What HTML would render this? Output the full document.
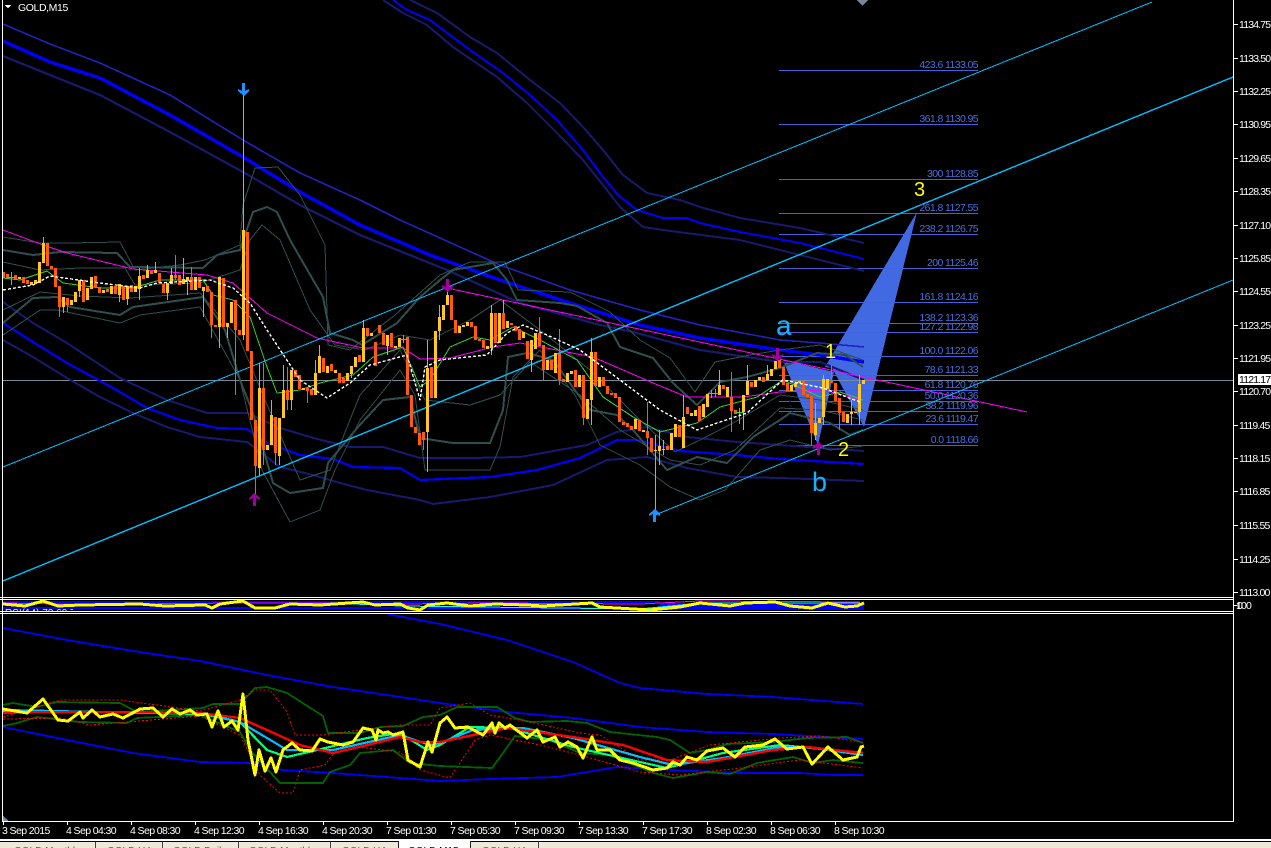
<!DOCTYPE html>
<html><head><meta charset="utf-8"><title>GOLD,M15</title>
<style>
html,body{margin:0;padding:0;background:#000;overflow:hidden}
svg{display:block;position:absolute;left:0;top:0}
text{font-family:"Liberation Sans",sans-serif}
.g{stroke:#2f4f4f;fill:none}
.p{fill:none;stroke-linejoin:round}
.ax text{fill:#fff;font-size:10.5px}
.px text{letter-spacing:-.85px}
.tm text{letter-spacing:-.6px}
.fib line{stroke:#3f62dd;stroke-width:1}
.fib text{fill:#4a6ee0;font-size:10.5px;text-anchor:end;letter-spacing:-.6px}
</style></head><body>
<svg width="1271" height="848" viewBox="0 0 1271 848" xmlns="http://www.w3.org/2000/svg">
<defs><clipPath id="c"><rect x="3" y="606" width="70" height="5"/></clipPath></defs>
<rect width="1271" height="848" fill="#000"/>
<g shape-rendering="crispEdges">
<!-- wave fill -->
<polygon points="783,360 818,445 834,372" fill="#4169e1"/>
<polygon points="825,367 917,212 864,427 832,368" fill="#4169e1"/>
<!-- fib -->
<g class="fib">
<line x1="779" x2="978" y1="70.5" y2="70.5"/><line x1="779" x2="978" y1="124.5" y2="124.5"/><line x1="779" x2="978" y1="179.5" y2="179.5"/><line x1="779" x2="978" y1="213.5" y2="213.5"/><line x1="779" x2="978" y1="234.5" y2="234.5"/><line x1="779" x2="978" y1="268.5" y2="268.5"/><line x1="779" x2="978" y1="302.5" y2="302.5"/><line x1="779" x2="978" y1="323.5" y2="323.5"/><line x1="779" x2="978" y1="332.5" y2="332.5"/><line x1="779" x2="978" y1="356.5" y2="356.5"/><line x1="779" x2="978" y1="375.5" y2="375.5"/><line x1="779" x2="978" y1="390.5" y2="390.5"/><line x1="779" x2="978" y1="401.5" y2="401.5"/><line x1="779" x2="978" y1="411.5" y2="411.5"/><line x1="779" x2="978" y1="424.5" y2="424.5"/><line x1="779" x2="978" y1="445.5" y2="445.5"/>
</g>
<!-- price line -->
<line x1="3" x2="1233" y1="380.5" y2="380.5" stroke="#778899"/>
<!-- blue envelopes, family 1 -->
<polyline class="p" stroke="#2222bb" stroke-width="1.6" points="3,24 50,44 100,63 170,95 243,140 300,173 360,200 400,220 500,265 570,290 640,310 700,325 780,340 820,343 864,347"/>
<polyline class="p" stroke="#0000ff" stroke-width="3.4" points="3,41 50,62 100,78 170,115 243,157 300,192 360,225 430,255 500,280 570,303 640,325 700,338 780,350 820,355 864,362"/>
<polyline class="p" stroke="#191970" stroke-width="2.2" points="3,56 50,75 100,95 170,132 243,172 300,205 360,235 447,270 520,303 600,325 633,332 700,350 780,362 820,362 864,380"/>
<!-- family 2 -->
<polyline class="p" stroke="#191970" stroke-width="2" points="410,0 437,13 470,37 497,53 530,80 560,103 583,127 603,150 623,175 647,193 680,200 700,207 740,218 800,228 864,243"/>
<polyline class="p" stroke="#0000ff" stroke-width="2" points="393,0 407,10 430,20 470,50 503,73 530,95 557,120 583,150 603,177 618,195 637,210 663,218 687,218 700,223 740,232 800,243 864,259"/>
<polyline class="p" stroke="#191970" stroke-width="2" points="383,0 403,13 427,25 453,47 497,77 527,103 557,133 583,160 603,185 620,207 643,227 663,230 740,240 800,255 864,271"/>
<!-- family 3 -->
<polyline class="p" stroke="#191970" stroke-width="2" points="3,302 33,323 67,343 120,378 167,400 207,413 247,413 280,428 317,439 350,447 383,447 420,458 470,458 520,457 587,445 617,432 647,427 687,437 737,442 780,445 864,451"/>
<polyline class="p" stroke="#0000ff" stroke-width="2.2" points="3,323 33,342 67,363 113,388 147,408 180,420 217,428 247,429 267,443 300,455 333,459 353,467 400,468 420,480 490,477 537,470 580,458 617,440 637,440 680,451 737,455 780,459 864,464"/>
<polyline class="p" stroke="#191970" stroke-width="2" points="3,340 33,357 67,378 100,397 133,413 167,427 200,437 247,442 280,467 313,475 340,483 367,490 420,500 433,504 490,497 553,485 607,460 647,457 687,468 737,477 780,478 864,481"/>
<!-- bollinger thick -->
<polyline class="g" stroke-width="2" points="3,250 33,255 60,252 117,253 130,267 203,268 217,255 240,250 245,235 253,212 267,207 277,212 290,240 323,297 330,333 353,340 362,345 397,323 420,297 440,280 453,270 493,263 507,280 517,300 560,303 577,306 607,323 620,347 653,358 673,383 697,405 720,382 747,377 780,368 817,353 845,355 863,367"/>
<polyline class="g" stroke-width="2" points="3,323 33,298 57,297 70,307 120,315 133,307 203,297 225,330 240,380 253,413 273,483 290,493 323,488 328,463 358,427 383,400 410,397 420,438 453,443 490,443 503,410 508,357 527,353 553,360 577,393 590,410 617,415 633,430 667,470 697,457 727,463 753,437 780,420 790,413 830,423 850,435 863,430"/>
<!-- bollinger thin -->
<polyline class="g" points="3,237 40,243 70,243 120,242 135,270 180,265 205,260 240,245 243,205 255,168 278,167 300,195 325,245 328,345 350,350 395,315 440,275 470,262 505,262 518,290 570,292 610,312 640,340 670,358 695,392 715,362 750,355 780,350 820,345 863,360"/>
<polyline class="g" points="3,335 40,310 57,310 120,323 140,315 200,307 240,380 262,470 290,522 320,510 335,470 360,420 400,370 415,395 425,470 490,470 500,447 513,377 540,350 575,395 600,445 640,465 670,487 700,500 725,490 760,450 790,440 830,450 863,446"/>
<polyline class="g" points="3,262 40,270 80,268 125,268 135,285 200,283 240,270 250,240 262,225 280,240 310,310 335,345 365,350 400,335 430,340 470,320 500,300 540,330 590,370 640,420 675,452 700,440 735,422 780,395 820,400 863,410"/>
<polyline class="g" points="3,310 40,292 80,296 130,298 200,293 240,340 265,400 300,480 330,470 360,395 400,350 425,400 470,405 500,395 530,362 580,395 620,430 670,460 700,465 735,450 780,408 820,410 863,420"/>
<!-- magenta -->
<polyline class="p" stroke="#ff00ff" points="3,230 43,245 67,253 133,269 207,275 233,283 267,313 317,338 363,348 403,348 420,359 450,358 493,347 520,343 593,357 653,383 687,397 743,397 780,392 823,390 863,400"/>
<line x1="447" y1="288" x2="1027" y2="412" stroke="#ff00ff"/>
<!-- green -->
<polyline class="p" stroke="#32cd32" points="3,278 20,280 47,271 63,283 100,288 133,288 160,280 203,280 213,295 233,300 250,317 267,367 277,393 300,390 320,383 353,375 373,357 403,347 420,387 430,380 450,347 473,337 490,340 513,327 540,340 577,360 603,397 633,417 660,432 697,423 720,407 757,397 783,380 820,397 840,392 863,400"/>
<!-- trend lines -->
<line x1="3" y1="467" x2="1152" y2="2" stroke="#00bfff"/>
<line x1="3" y1="581" x2="1233" y2="77" stroke="#00bfff" stroke-width="1.4"/>
<line x1="655" y1="515" x2="1233" y2="280" stroke="#00bfff"/>
<!-- wicks -->
<path fill="none" stroke="#e8a428" d="M43.500 237V243M63.500 307V313M79.500 291V297M119.500 295V302M127.500 299V305M139.500 268V300M147.500 265V278M155.500 262V270M167.500 293V300M171.500 268V275M183.500 258V279M187.500 281V295M203.500 291V317M219.500 327V348M227.500 327V338M243.500 84V340M259.500 363V475M271.500 400V445M279.500 456V465M283.500 365V390M291.500 400V410M315.500 360V373M319.500 345V356M351.500 374V378M363.500 320V328M387.500 346V355M427.500 340V472M439.500 305V340M447.500 285V295M491.500 305V355M503.500 300V315M531.500 360V372M591.500 338V425M655.500 435V515M659.500 430V465M663.500 440V455M683.500 395V420M719.500 370V385M743.500 412V430M747.500 365V381M767.500 365V380M815.500 403V440M823.500 375V425M851.500 400V425M859.500 375V425"/>
<path fill="none" stroke="#f06018" d="M59.500 307V317M67.500 305V312M175.500 255V280M191.500 267V277M211.500 325V338M235.500 320V395M255.500 466V495M263.500 363V465M275.500 453V465M287.500 367V410M307.500 391V403M423.500 440V450M539.500 317V333M543.500 370V380M559.500 329V385M583.500 418V425M647.500 402V455M731.500 372V432M811.500 433V446M839.500 398V430M831.500 365V381"/>
<!-- gold bodies -->
<path fill="none" stroke="#ffc91f" stroke-width="3" d="M19.500 277V279M31.500 282V285M35.500 280V284M39.500 262V283M43.500 243V263M63.500 297V307M71.500 300V305M75.500 292V302M79.500 280V291M87.500 288V300M91.500 277V289M103.500 290V293M111.500 286V294M119.500 284V295M127.500 286V299M135.500 286V292M139.500 276V289M147.500 270V278M155.500 270V273M167.500 283V293M171.500 275V284M183.500 279V284M187.500 277V281M195.500 277V290M203.500 287V291M219.500 277V327M227.500 323V327M231.500 302V323M243.500 230V335M259.500 388V468M267.500 445V450M271.500 415V445M279.500 418V456M283.500 390V418M291.500 370V400M303.500 388V390M315.500 373V395M319.500 356V373M327.500 366V373M335.500 370V373M347.500 373V381M351.500 366V374M355.500 357V367M363.500 328V362M371.500 333V336M387.500 335V346M395.500 346V348M399.500 338V347M427.500 368V432M435.500 331V398M439.500 317V331M443.500 305V320M447.500 295V305M459.500 326V333M463.500 325V327M467.500 322V326M487.500 346V349M491.500 313V348M499.500 313V343M507.500 321V328M523.500 332V338M531.500 340V360M535.500 333V349M547.500 360V370M555.500 353V373M567.500 373V382M571.500 371V374M579.500 375V387M587.500 399V419M591.500 352V400M599.500 377V387M635.500 419V429M643.500 430V432M655.500 450V451M659.500 446V451M663.500 449V450M671.500 433V450M675.500 424V437M683.500 417V448M691.500 413V416M695.500 410V416M703.500 404V417M707.500 394V407M719.500 385V395M727.500 387V397M743.500 395V412M747.500 381V395M755.500 380V387M759.500 377V380M767.500 374V380M771.500 369V376M775.500 361V369M791.500 385V391M795.500 383V387M799.500 381V383M815.500 423V435M819.500 418V423M823.500 379V417M827.500 379V389M847.500 414V423M851.500 412V414M855.500 412V413M859.500 384V412M863.500 380V384"/>
<!-- orange bodies -->
<path fill="none" stroke="#ff5a14" stroke-width="3" d="M3.500 272V278M7.500 274V278M15.500 275V279M23.500 277V283M27.500 280V284M47.500 243V266M51.500 266V269M55.500 268V287M59.500 286V307M67.500 298V305M83.500 280V302M95.500 276V287M99.500 287V293M107.500 289V292M115.500 286V294M123.500 286V300M131.500 285V292M143.500 275V279M151.500 271V274M159.500 273V283M163.500 284V293M175.500 275V278M179.500 275V285M191.500 277V290M199.500 277V288M207.500 286V292M211.500 292V325M215.500 325V327M223.500 278V327M235.500 300V330M239.500 330V335M247.500 232V351M251.500 351V420M255.500 420V466M263.500 388V450M275.500 417V453M287.500 390V400M295.500 370V377M299.500 375V389M307.500 388V391M311.500 389V395M323.500 358V372M331.500 364V371M339.500 373V383M343.500 378V383M359.500 355V362M367.500 328V336M375.500 342V366M379.500 325V333M383.500 333V345M391.500 333V347M407.500 337V395M411.500 395V427M415.500 427V433M419.500 433V445M423.500 432V440M431.500 367V398M451.500 295V320M455.500 320V333M471.500 322V327M475.500 326V340M479.500 339V341M483.500 340V348M495.500 313V343M503.500 313V329M511.500 323V325M515.500 326V331M519.500 329V340M527.500 341V359M539.500 333V346M543.500 345V370M551.500 360V370M559.500 353V380M563.500 379V382M575.500 370V387M583.500 375V418M595.500 352V386M603.500 377V386M607.500 386V394M611.500 393V395M615.500 393V398M619.500 397V422M623.500 422V425M627.500 423V427M631.500 426V430M639.500 420V431M647.500 431V438M651.500 438V452M667.500 446V450M679.500 425V437M687.500 407V414M699.500 406V421M723.500 385V389M731.500 397V411M735.500 410V414M751.500 382V387M763.500 377V382M779.500 360V368M783.500 367V385M787.500 383V391M803.500 381V395M807.500 394V397M811.500 396V433M831.500 381V383M835.500 383V401M839.500 398V413M843.500 412V422"/>
<!-- green crosses -->
<path fill="none" stroke="#32e032" d="M11.500 272V285M8 277.500H15M403.500 335V343M400 339.500H407M711.500 390V398M708 393.500H715M715.500 389V397M712 393.500H719M739.500 408V424M736 412.500H743"/>
<!-- white dashed -->
<polyline class="p" stroke="#fff" stroke-width="1.4" stroke-dasharray="3 2" points="3,290 33,285 50,276 100,283 140,288 157,283 210,280 233,288 250,303 267,330 300,380 327,398 350,383 370,365 407,355 420,400 425,367 440,360 487,355 507,333 523,325 547,335 580,350 620,380 660,410 697,430 720,422 747,413 777,385 783,380 823,388 860,402"/>
<path d="M790 400L798 440" stroke="#0000d0" stroke-dasharray="2 3" fill="none"/>
<!-- arrows -->
<path fill="#1e90ff" d="M242 83H245V91L249 89V91L244 96L238 91V89L242 91Z"/>
<path fill="#1e90ff" d="M653 522H656V514L660 516V514L655 509L649 514V516L653 514Z"/>
<path fill="#a000a0" d="M253 506H256V498L260 500V498L254.500 493L249 498V500L253 498Z"/>
<path fill="#a000a0" d="M446 279H449V287L453 285V287L447.500 292L442 287V285L446 287Z"/>
<path fill="#a000a0" d="M776 348H779V356L783 354V356L777.500 361L772 356V354L776 356Z"/>
<path fill="#a000a0" d="M817 455H820V447L824 449V447L818.500 442L813 447V449L817 447Z"/>
<polygon points="857,0 868,0 862.500,6" fill="#778899"/>
<!-- small panel -->
<rect x="660" y="603" width="204" height="7" fill="#0000ff"/>
<rect x="3" y="601" width="657" height="2" fill="#0000ff"/>
<rect x="3" y="607" width="657" height="2" fill="#0000ff"/>
<polyline class="p" stroke="#ff00ff" points="3,603 60,604 130,604 240,603 320,603 400,604 490,603 640,604 700,601 860,602"/>
<polyline class="p" stroke="#00ffff" points="330,603 400,606 640,609 700,603 860,603"/>
<polyline class="p" stroke="#ffff00" stroke-width="3" points="3,604 25,606 43,601 58,606 80,605 140,604 165,606 205,605 212,608 220,604 243,601 255,608 275,608 290,604 320,605 363,602 375,605 400,604 408,608 420,610 428,605 447,603 470,606 495,604 527,605 543,606 592,603 600,607 650,610 680,607 700,603 730,606 745,603 775,602 790,606 812,608 828,603 845,607 857,606 864,603"/>
<!-- bottom panel -->
<polyline class="p" stroke="#0000ff" stroke-width="1.8" points="3,628 67,640 133,651 200,661 267,675 333,687 400,697 440,703 507,712 573,718 640,727 707,732 773,734 863,739"/>
<polyline class="p" stroke="#0000ff" stroke-width="1.8" points="387,614 440,624 507,640 573,662 620,683 640,688 707,694 773,697 863,704"/>
<polyline class="p" stroke="#0000ff" stroke-width="1.8" points="3,727 67,740 133,753 200,762 250,763 283,770 333,773 400,778 440,781 490,779 557,777 617,767 673,770 740,773 800,773 833,775 863,775"/>
<polyline class="p" stroke="#006400" stroke-width="1.8" points="3,705 13,703 37,707 57,702 120,703 137,712 203,708 213,704 240,704 255,688 267,687 287,693 323,716 328,733 360,733 380,727 403,726 423,717 440,715 457,707 497,707 515,718 530,722 567,721 587,723 610,732 657,737 670,740 690,753 707,750 727,744 773,742 807,738 847,737 863,743"/>
<polyline class="p" stroke="#006400" stroke-width="1.8" points="3,726 17,723 37,717 80,722 127,723 137,718 200,715 240,732 250,750 280,783 323,783 330,772 350,765 360,753 393,750 410,763 440,766 492,768 503,753 515,736 550,740 580,753 610,755 653,773 673,778 707,772 730,774 757,763 793,757 813,763 833,760 863,763"/>
<polyline class="p" stroke="#ff0000" stroke-dasharray="2 2" points="3,717 40,706 60,700 120,700 200,711 240,700 255,690 270,690 287,712 295,735 323,735 360,730 400,725 430,725 440,708 470,703 490,715 530,722 580,733 600,735 640,760 670,760 710,745 780,738 820,736 863,742"/>
<polyline class="p" stroke="#ff0000" stroke-dasharray="2 2" points="3,719 60,718 90,725 200,716 240,735 260,775 280,793 293,793 300,770 325,765 340,745 400,752 420,770 450,778 475,740 490,735 540,745 580,755 640,772 680,775 740,768 800,760 863,768"/>
<polyline class="p" stroke="#00ff7f" stroke-width="2.2" points="3,712 100,712 203,714 240,722 267,750 287,757 317,750 367,738 400,733 427,750 440,745 470,727 510,728 573,747 640,762 667,768 723,753 780,745 863,753"/>
<polyline class="p" stroke="#00bfff" stroke-width="2.2" points="3,710 100,712 203,713 240,722 267,738 287,750 333,750 400,735 430,745 440,743 473,730 523,728 573,738 640,757 673,765 723,758 780,747 807,747 863,755"/>
<polyline class="p" stroke="#ff0000" stroke-width="2.4" points="3,713 33,712 100,712 200,713 240,718 267,730 300,745 333,753 367,745 400,737 420,742 440,742 473,735 507,728 573,737 623,745 667,760 707,762 773,750 807,747 863,753"/>
<polyline class="p" stroke="#ffff00" stroke-width="3" points="3,709 27,713 43,699 58,720 68,721 80,712 83,718 92,710 100,717 113,714 123,718 140,709 153,708 163,717 172,709 180,714 190,710 197,715 207,714 212,727 218,711 224,727 232,721 238,730 243,694 248,740 255,775 259,750 265,771 271,758 276,772 283,750 292,743 300,750 312,751 320,739 328,742 343,745 353,742 363,728 372,730 376,740 378,730 383,733 388,732 393,735 403,732 408,760 420,767 428,742 432,752 440,723 447,717 455,728 468,727 483,735 492,723 495,733 499,723 505,728 510,725 527,738 537,730 543,742 555,737 560,747 568,742 577,747 583,758 592,737 597,750 610,750 620,760 633,763 653,770 667,768 673,762 680,765 687,757 697,760 707,751 723,748 735,757 745,747 763,745 775,739 787,749 803,747 812,764 828,747 843,760 857,757 861,747 864,746"/>
<!-- frames -->
<rect x="2" y="0" width="1" height="822" fill="#fff"/>
<rect x="1233" y="0" width="1" height="822" fill="#fff"/>
<rect x="0" y="597" width="1234" height="1" fill="#fff"/>
<rect x="0" y="599" width="1234" height="1" fill="#fff"/>
<rect x="0" y="611" width="1234" height="1" fill="#fff"/>
<rect x="0" y="613" width="1234" height="1" fill="#fff"/>
<rect x="2" y="821" width="1232" height="1" fill="#fff"/>
<polygon points="3,816 9,821 3,821" fill="#778899"/>
<!-- price ticks -->
<path stroke="#fff" d="M1234 24.500h4M1234 58.500h4M1234 91.500h4M1234 124.500h4M1234 158.500h4M1234 191.500h4M1234 225.500h4M1234 258.500h4M1234 291.500h4M1234 325.500h4M1234 358.500h4M1234 391.500h4M1234 425.500h4M1234 458.500h4M1234 491.500h4M1234 525.500h4M1234 559.500h4M1234 592.500h4M1234 605.500h3"/>
<!-- time ticks -->
<path stroke="#fff" d="M3.500 822v3M67.500 822v3M131.500 822v3M195.500 822v3M259.500 822v3M323.500 822v3M387.500 822v3M451.500 822v3M515.500 822v3M579.500 822v3M643.500 822v3M707.500 822v3M771.500 822v3M835.500 822v3"/>
<polygon points="5,5 11,5 8,8.500" fill="#fff"/>
<rect x="1238" y="374" width="33" height="11" fill="#fff"/>
<rect x="0" y="839" width="1271" height="2" fill="#fff"/>
<rect x="0" y="842" width="1271" height="6" fill="#ece9d8"/>
<rect x="399" y="841" width="71" height="7" fill="#fff"/>
<rect x="398" y="841" width="1" height="7" fill="#222"/>
<rect x="470" y="841" width="1" height="7" fill="#222"/>
<path stroke="#444" d="M95.500 842v6M162.500 842v6M238.500 842v6M330.500 842v6M538.500 842v6"/>
</g>
<text x="18" y="11" fill="#fff" style="font-size:10.5px;letter-spacing:-.4px">GOLD,M15</text>
<text x="5" y="616" fill="#fff" clip-path="url(#c)" style="font-size:10px">RSI(14) 72.69 72.69</text>
<!-- fib labels -->
<g class="fib">
<text x="978" y="68">423.6  1133.05</text>
<text x="978" y="122">361.8  1130.95</text>
<text x="978" y="177">300  1128.85</text>
<text x="978" y="211">261.8  1127.55</text>
<text x="978" y="232">238.2  1126.75</text>
<text x="978" y="266">200  1125.46</text>
<text x="978" y="300">161.8  1124.16</text>
<text x="978" y="321">138.2  1123.36</text>
<text x="978" y="330">127.2  1122.98</text>
<text x="978" y="354">100.0  1122.06</text>
<text x="978" y="373">78.6  1121.33</text>
<text x="978" y="388">61.8  1120.76</text>
<text x="978" y="399">50.0  1120.36</text>
<text x="978" y="409">38.2  1119.96</text>
<text x="978" y="422">23.6  1119.47</text>
<text x="978" y="443">0.0  1118.66</text>
</g>
<!-- wave labels -->
<text x="776" y="335" fill="#12b4ff" style="font-size:28px">a</text>
<text x="812" y="491" fill="#12b4ff" style="font-size:27px">b</text>
<text x="825" y="358" fill="#ffff00" style="font-size:20px">1</text>
<text x="838" y="456" fill="#ffff00" style="font-size:20px">2</text>
<text x="914" y="196" fill="#ffff00" style="font-size:20px">3</text>
<!-- axis -->
<g class="ax px">
<text x="1239" y="28">1134.75</text><text x="1239" y="62">1133.50</text><text x="1239" y="95">1132.25</text><text x="1239" y="128">1130.95</text><text x="1239" y="162">1129.65</text><text x="1239" y="195">1128.35</text><text x="1239" y="229">1127.10</text><text x="1239" y="262">1125.85</text><text x="1239" y="295">1124.55</text><text x="1239" y="329">1123.25</text><text x="1239" y="362">1121.95</text><text x="1239" y="395">1120.70</text><text x="1239" y="429">1119.45</text><text x="1239" y="462">1118.15</text><text x="1239" y="495">1116.85</text><text x="1239" y="529">1115.55</text><text x="1239" y="563">1114.25</text><text x="1239" y="596">1113.00</text>
<text x="1236" y="609">100</text><text x="1237" y="609">0</text>
</g>
<text x="1239" y="383" fill="#000" style="font-size:10.5px;letter-spacing:-.85px">1121.17</text>
<g class="ax tm">
<text x="2" y="834">3 Sep 2015</text><text x="66" y="834">4 Sep 04:30</text><text x="130" y="834">4 Sep 08:30</text><text x="194" y="834">4 Sep 12:30</text><text x="258" y="834">4 Sep 16:30</text><text x="322" y="834">4 Sep 20:30</text><text x="386" y="834">7 Sep 01:30</text><text x="450" y="834">7 Sep 05:30</text><text x="514" y="834">7 Sep 09:30</text><text x="578" y="834">7 Sep 13:30</text><text x="642" y="834">7 Sep 17:30</text><text x="706" y="834">8 Sep 02:30</text><text x="770" y="834">8 Sep 06:30</text><text x="834" y="834">8 Sep 10:30</text>
</g>
<!-- tabs -->
<g style="font-size:10px" fill="#555">
<text x="14" y="854">GOLD,Monthly</text><text x="107" y="854">GOLD,H4</text><text x="173" y="854">GOLD,Daily</text><text x="249" y="854">GOLD,Monthly</text><text x="342" y="854">GOLD,H4</text><text x="408" y="854" fill="#000">GOLD,M15</text><text x="482" y="854">GOLD,H4</text>
</g>
</svg>
</body></html>
